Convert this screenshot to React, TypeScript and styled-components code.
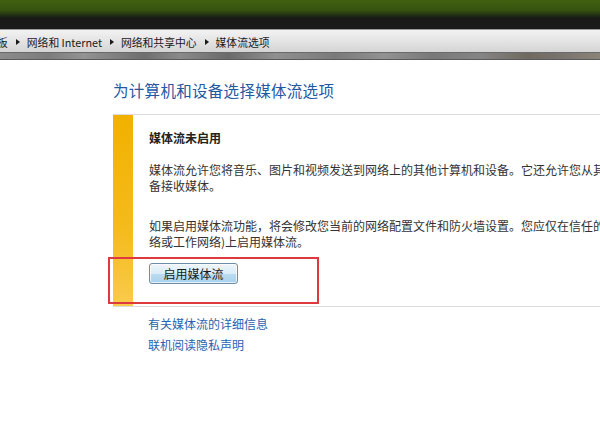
import React from 'react'
import styled, { createGlobalStyle } from 'styled-components'

const GlobalStyle = createGlobalStyle`
  html, body {
    margin: 0;
    padding: 0;
    background: #fff;
    overflow: hidden;
  }
  body {
    font-family: "Noto Sans CJK SC", "Noto Sans", sans-serif;
  }
`

const Page = styled.div`
  width: 600px;
  height: 440px;
  overflow: hidden;
  background: #fff;
  position: relative;
`

const TitleBar = styled.div`
  height: 29px;
  background: linear-gradient(
    to bottom,
    #41610f 0%,
    #365310 35%,
    #223012 52%,
    #191a17 62%,
    #1a1a1a 100%
  );
  border-bottom: 1px solid #9a9a9a;
`

const AddressBar = styled.div`
  height: 22px;
  display: flex;
  align-items: center;
  background: linear-gradient(to bottom, #f2f2f2 0%, #e4e4e4 50%, #d4d4d4 100%);
  font-size: 10.8px;
  color: #1a1a1a;
  white-space: nowrap;
  margin-left: -3px;
`

const Crumb = styled.span`
  line-height: 22px;
  padding-top: 1px;
`

const Arrow = styled.span`
  display: inline-block;
  width: 0;
  height: 0;
  margin: 1px 7px 0 8px;
  border-top: 3.5px solid transparent;
  border-bottom: 3.5px solid transparent;
  border-left: 4px solid #1a1a1a;
`

const ToolStrip = styled.div`
  height: 6px;
  border-top: 1px solid #6a6a6a;
  border-bottom: 1px solid #5a5a5a;
  background: linear-gradient(
    to right,
    #8c8c8c 0%,
    #7c7c7c 8%,
    #939393 14%,
    #6e6e6e 24%,
    #8a8a8a 30%,
    #6a6a6a 38%,
    #909090 46%,
    #7a7a7a 56%,
    #929292 64%,
    #787878 72%,
    #858585 80%,
    #6f6a60 88%,
    #7a7470 94%,
    #8a8478 100%
  );
`

const Content = styled.div`
  padding: 19px 0 0 113px;
`

const Title = styled.h1`
  margin: 0;
  font-size: 15.5px;
  font-weight: normal;
  line-height: 22px;
  color: #2358a2;
  letter-spacing: 0.3px;
  white-space: nowrap;
`

const Card = styled.div`
  margin-top: 13px;
  width: 600px;
  display: flex;
  border-top: 1px solid #dcdcdc;
  border-bottom: 1px solid #dcdcdc;
`

const Stripe = styled.div`
  width: 20px;
  flex: none;
  background: linear-gradient(to bottom, #f1b100 0%, #f4bb1c 60%, #f9cb4c 100%);
`

const CardBody = styled.div`
  padding: 15px 0 22px 16px;
  color: #333;
  font-size: 12px;
`

const Heading = styled.div`
  font-weight: bold;
  line-height: 16px;
  color: #222;
`

const Para = styled.p<{ $gap: number }>`
  margin: ${p => p.$gap}px 0 0;
  line-height: 16px;
  width: 534px;
`

const EnableButton = styled.button`
  margin-top: 13px;
  width: 89px;
  height: 21px;
  padding: 0;
  font-family: inherit;
  font-size: 12px;
  color: #1a1a1a;
  border: 1px solid #6c8ca8;
  border-radius: 3px;
  background: linear-gradient(to bottom, #eef6fb 0%, #d9ecf7 50%, #bcdcf0 52%, #a9d1ec 100%);
  box-shadow: inset 0 0 0 1px rgba(255, 255, 255, 0.7);
`

const Links = styled.div`
  margin: 6px 0 0 35px;
  display: flex;
  flex-direction: column;
  font-size: 12px;
  line-height: 21px;
`

const Link = styled.a`
  color: #2b62b0;
  text-decoration: none;
`

// red marker drawn over the enable button area
const Highlight = styled.div`
  position: absolute;
  left: 108px;
  top: 257px;
  width: 207px;
  height: 43px;
  border: 2px solid #dc3a3e;
  pointer-events: none;
`

const crumbs = ['板', '网络和 Internet', '网络和共享中心', '媒体流选项']

export default function App() {
  return (
    <Page>
      <GlobalStyle />
      <TitleBar />
      <AddressBar>
        {crumbs.map((c, i) => (
          <React.Fragment key={c}>
            {i > 0 && <Arrow />}
            <Crumb>{c}</Crumb>
          </React.Fragment>
        ))}
      </AddressBar>
      <ToolStrip />
      <Content>
        <Title>为计算机和设备选择媒体流选项</Title>
        <Card>
          <Stripe />
          <CardBody>
            <Heading>媒体流未启用</Heading>
            <Para $gap={16}>
              媒体流允许您将音乐、图片和视频发送到网络上的其他计算机和设备。它还允许您从其他计算机和设备接收媒体。
            </Para>
            <Para $gap={24}>
              如果启用媒体流功能，将会修改您当前的网络配置文件和防火墙设置。您应仅在信任的网络(如家庭网络或工作网络)上启用媒体流。
            </Para>
            <EnableButton>启用媒体流</EnableButton>
          </CardBody>
        </Card>
        <Links>
          <Link>有关媒体流的详细信息</Link>
          <Link>联机阅读隐私声明</Link>
        </Links>
      </Content>
      <Highlight />
    </Page>
  )
}
